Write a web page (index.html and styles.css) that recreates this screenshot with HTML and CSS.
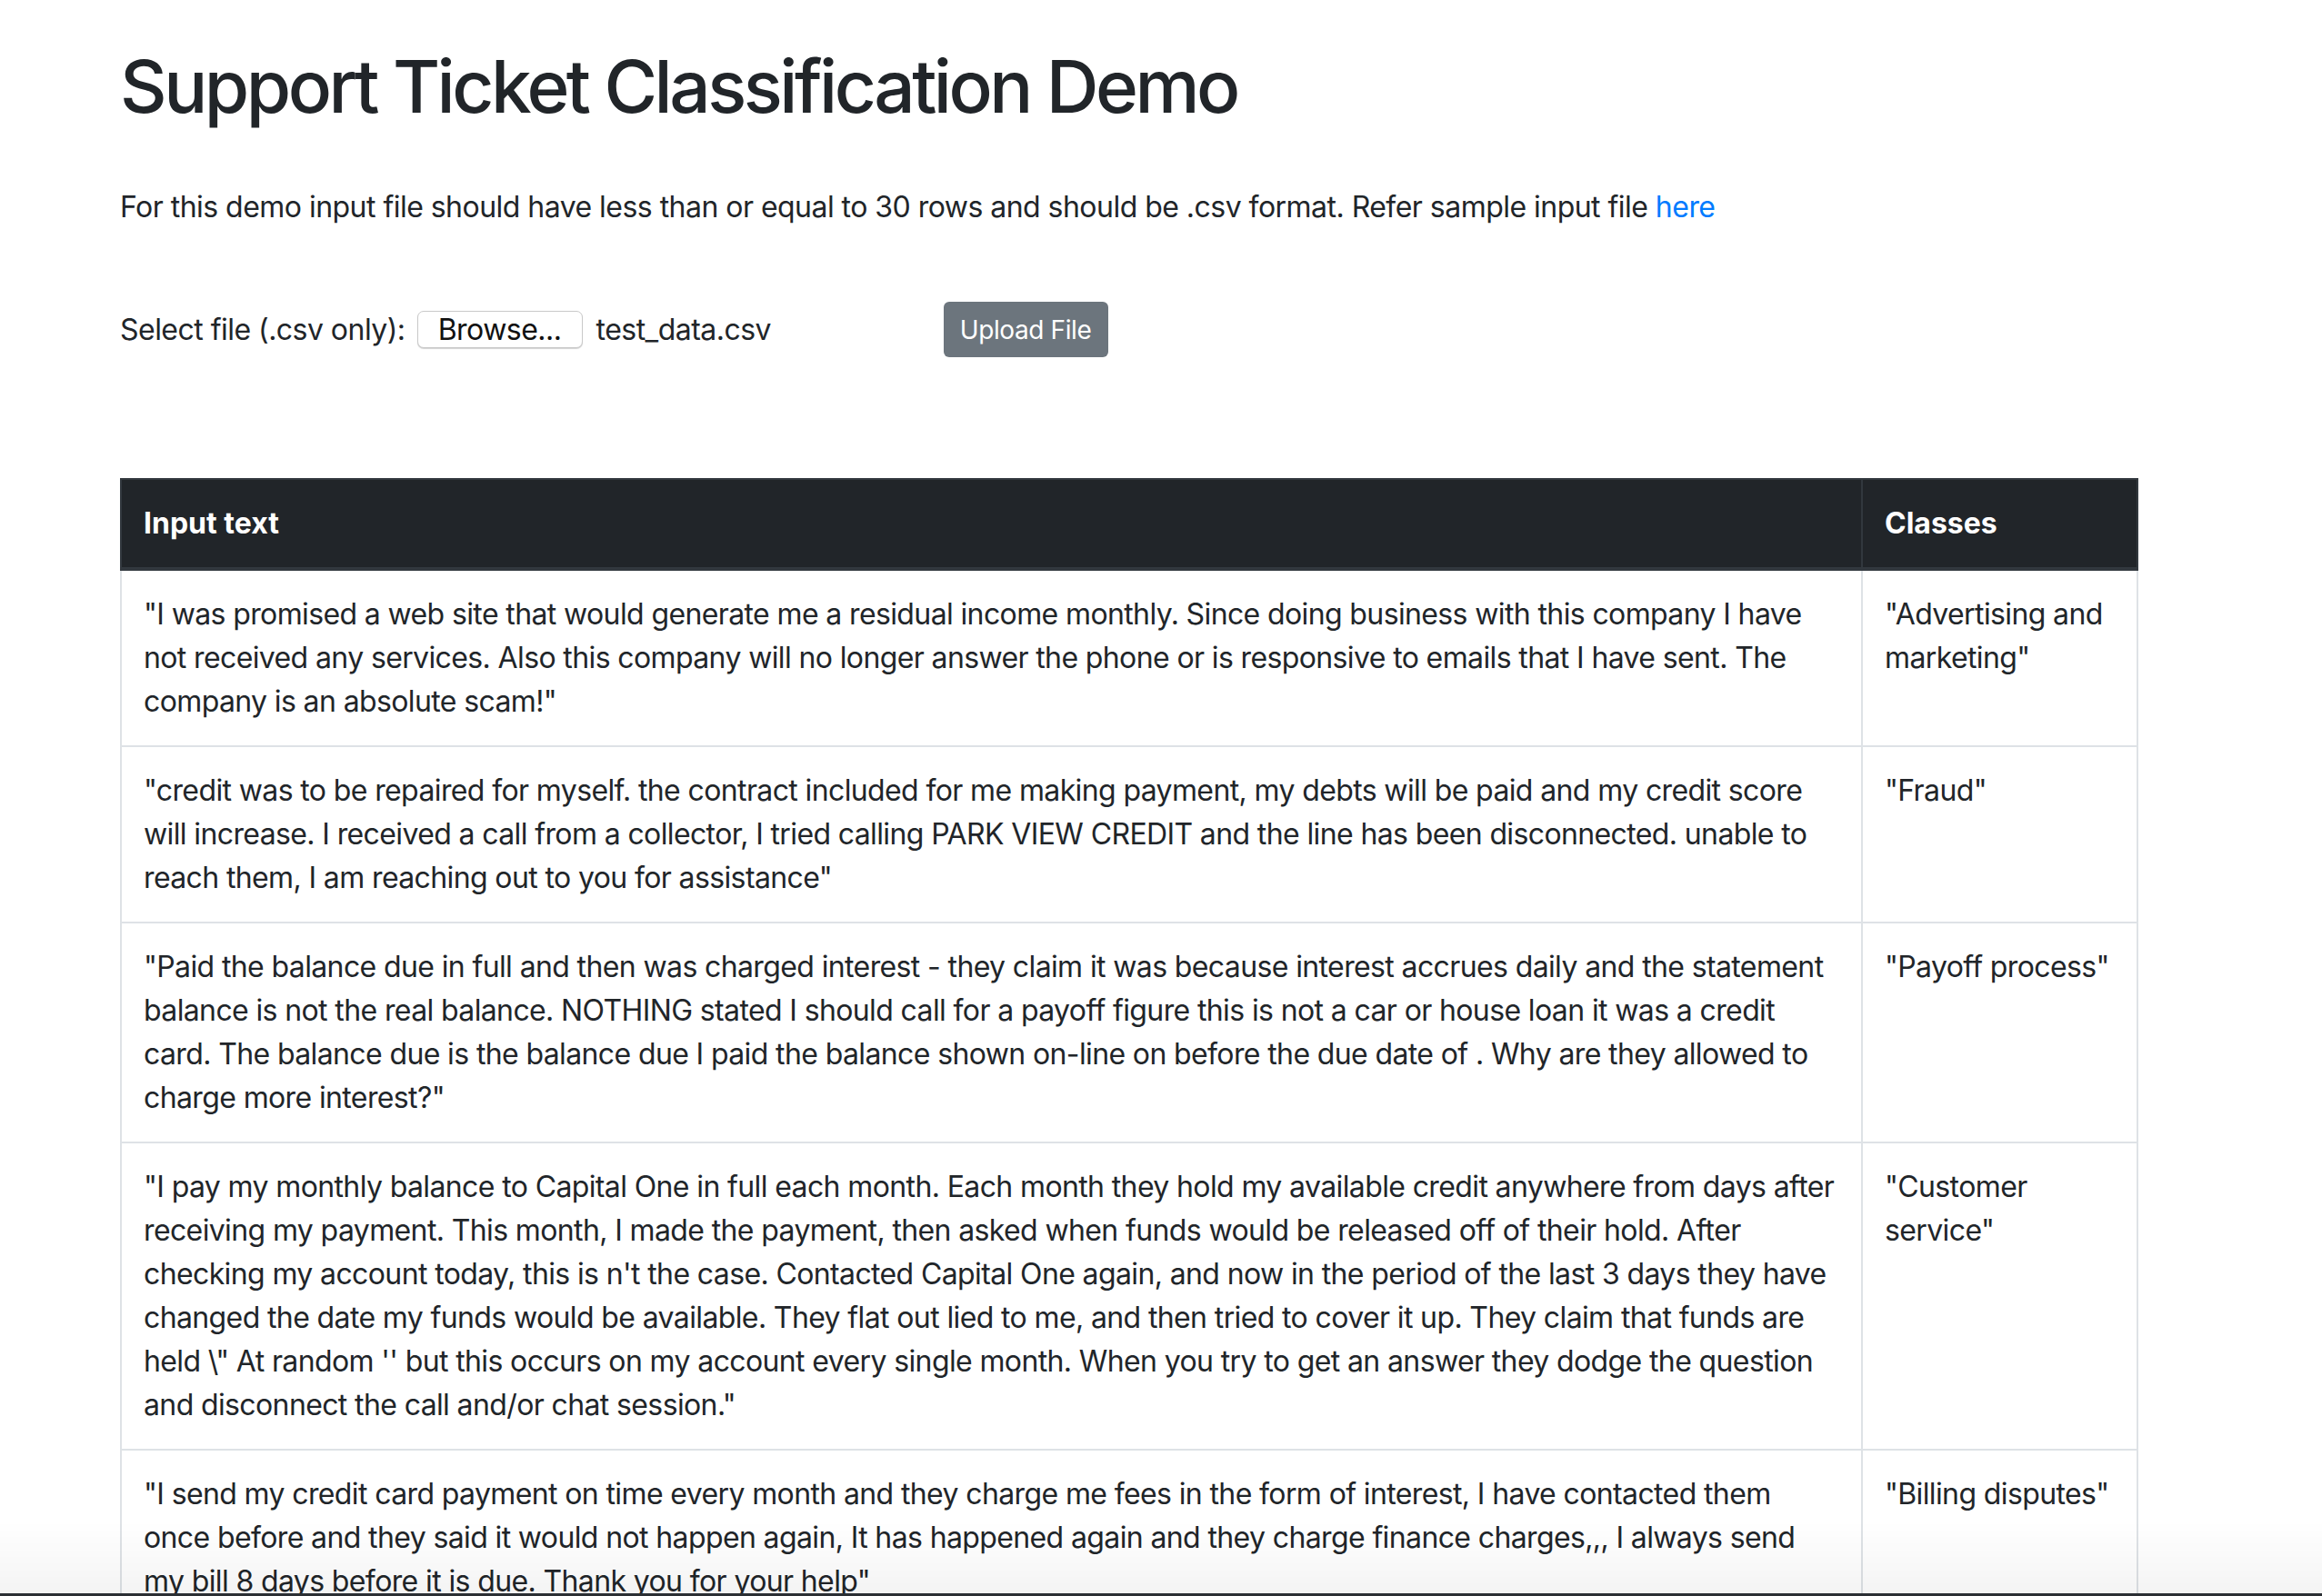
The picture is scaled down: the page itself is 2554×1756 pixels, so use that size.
FILE: index.html
```html
<!DOCTYPE html>
<html lang="en">
<head>
<meta charset="utf-8">
<title>Support Ticket Classification Demo</title>
<link rel="stylesheet" href="styles.css">
</head>
<body>
<main class="page">
  <h1 class="title">Support Ticket Classification Demo</h1>
  <p class="intro">For this demo input file should have less than or equal to 30 rows and should be .csv format. Refer sample input file <a class="link" href="#">here</a></p>
  <form class="upload-row">
    <span class="label">Select file (.csv only):</span>
    <span class="file-input"><span class="browse">Browse...</span><span class="file-name">test_data.csv</span></span>
    <button type="button" class="btn-upload">Upload File</button>
  </form>
  <table class="results">
    <colgroup><col class="col-text"><col class="col-class"></colgroup>
    <thead>
      <tr><th>Input text</th><th>Classes</th></tr>
    </thead>
    <tbody>
      <tr>
        <td>"I was promised a web site that would generate me a residual income monthly. Since doing business with this company I have not received any services. Also this company will no longer answer the phone or is responsive to emails that I have sent. The company is an absolute scam!"</td>
        <td>"Advertising and marketing"</td>
      </tr>
      <tr>
        <td>"credit was to be repaired for myself. the contract included for me making payment, my debts will be paid and my credit score will increase. I received a call from a collector, I tried calling PARK VIEW CREDIT and the line has been disconnected. unable to reach them, I am reaching out to you for assistance"</td>
        <td>"Fraud"</td>
      </tr>
      <tr>
        <td>"Paid the balance due in full and then was charged interest - they claim it was because interest accrues daily and the statement balance is not the real balance. NOTHING stated I should call for a payoff figure this is not a car or house loan it was a credit card. The balance due is the balance due I paid the balance shown on-line on before the due date of . Why are they allowed to charge more interest?"</td>
        <td>"Payoff process"</td>
      </tr>
      <tr>
        <td>"I pay my monthly balance to Capital One in full each month. Each month they hold my available credit anywhere from days after receiving my payment. This month, I made the payment, then asked when funds would be released off of their hold. After checking my account today, this is n't the case. Contacted Capital One again, and now in the period of the last 3 days they have changed the date my funds would be available. They flat out lied to me, and then tried to cover it up. They claim that funds are held \" At random '' but this occurs on my account every single month. When you try to get an answer they dodge the question and disconnect the call and/or chat session."</td>
        <td>"Customer service"</td>
      </tr>
      <tr>
        <td>"I send my credit card payment on time every month and they charge me fees in the form of interest, I have contacted them once before and they said it would not happen again, It has happened again and they charge finance charges,,, I always send my bill 8 days before it is due. Thank you for your help"</td>
        <td>"Billing disputes"</td>
      </tr>
    </tbody>
  </table>
</main>
<div class="window-edge"></div>
</body>
</html>
```
FILE: styles.css
```css
html, body {
  margin: 0;
  padding: 0;
  background: #fff;
}
body {
  font-family: Inter, "Noto Sans", sans-serif;
  font-size: 32px;
  line-height: 48px;
  letter-spacing: -0.53px;
  color: #212529;
}
.page {
  padding: 47px 0 0 132px;
}
.title {
  margin: 0 0 61px 0;
  font-size: 80px;
  line-height: 96px;
  font-weight: 500;
  letter-spacing: -3.5px;
}
.intro {
  margin: 0 0 80px 0;
}
.link {
  color: #007bff;
  text-decoration: none;
}
.upload-row {
  display: flex;
  align-items: center;
  height: 61px;
  margin: 0 0 133px 0;
}
.label {
  margin-right: 13px;
}
.file-input {
  display: flex;
  align-items: center;
  width: 579px;
}
.browse {
  box-sizing: border-box;
  width: 182px;
  height: 41px;
  display: flex;
  align-items: center;
  justify-content: center;
  border: 1px solid #c9c9c9;
  border-radius: 7px;
  box-shadow: 0 1px 1px rgba(0,0,0,0.18);
  background: #fff;
  color: #111;
  font-size: 32px;
  margin-right: 15px;
}
.file-name {
  color: #212529;
}
.btn-upload {
  box-sizing: border-box;
  width: 181px;
  height: 61px;
  border: 0;
  border-radius: 6px;
  background: #6c757d;
  color: #fff;
  font-family: Inter, "Noto Sans", sans-serif;
  font-size: 28px;
  line-height: 42px;
  letter-spacing: -0.4px;
  padding: 0;
}
.results {
  border-collapse: collapse;
  table-layout: fixed;
  width: 2218px;
}
.col-text { width: 1915px; }
.col-class { width: 303px; }
.results th {
  background: #212529;
  color: #fff;
  font-weight: 700;
  letter-spacing: 0;
  text-align: left;
  vertical-align: bottom;
  padding: 24px;
  border: 2px solid #32383e;
  border-bottom-width: 4px;
}
.results td {
  padding: 24px;
  border: 2px solid #dee2e6;
  vertical-align: top;
  letter-spacing: -0.62px;
}
.window-edge {
  position: fixed;
  left: 0;
  right: 0;
  bottom: 0;
  height: 80px;
  background: linear-gradient(to bottom, rgba(0,0,0,0), rgba(0,0,0,0.045));
  border-bottom: 3px solid #2b2f34;
  pointer-events: none;
}
```
